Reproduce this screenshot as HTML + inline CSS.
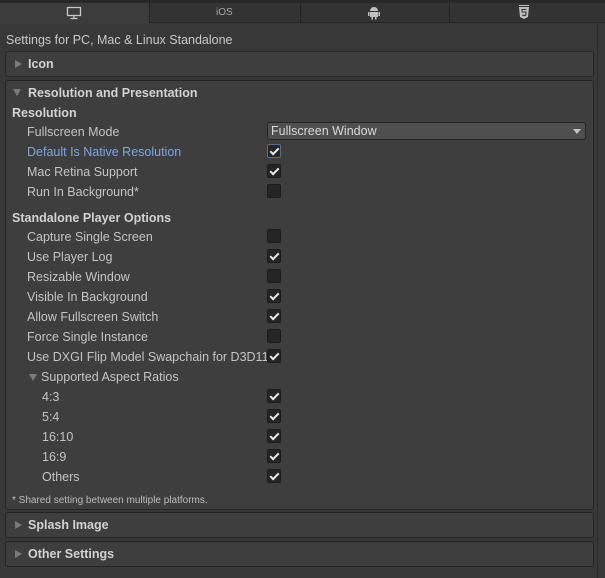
<!DOCTYPE html>
<html><head><style>
*{margin:0;padding:0;box-sizing:border-box}
body{width:605px;height:578px;background:#383838;font-family:"Liberation Sans",sans-serif;font-size:12.5px;color:#c4c4c4;position:relative;overflow:hidden}
.a{position:absolute;white-space:nowrap}
.tab{position:absolute;top:3px;height:20px;background:#333;border-left:1px solid #232323;border-bottom:1px solid #232323}
.box{position:absolute;left:5px;width:589px;background:#3e3e3e;border:1px solid #242424;border-radius:3px}
.hd{font-weight:bold;color:#d2d2d2;font-size:12.5px}
.tri{position:absolute;width:0;height:0}
.r{border-top:4px solid transparent;border-bottom:4px solid transparent;border-left:7px solid #7a7a7a}
.d{border-left:4px solid transparent;border-right:4px solid transparent;border-top:7px solid #7a7a7a}
.cb{position:absolute;left:267px;width:14px;height:14px;background:#252525;border:1px solid #1c1c1c;border-radius:2px}
.cb.c::after{content:"";position:absolute;left:4px;top:1px;width:3px;height:7px;border:solid #e6e6e6;border-width:0 2px 2px 0;transform:rotate(45deg)}
</style></head><body>
<div class="a" style="left:0;top:0;width:605px;height:3px;background:#282828"></div>
<div class="a" style="left:0;top:3px;width:149px;height:21px;background:#3c3c3c"></div>
<div class="tab" style="left:149px;width:151px"></div>
<div class="tab" style="left:300px;width:149px"></div>
<div class="tab" style="left:449px;width:156px"></div>
<svg class="a" style="left:66px;top:6px" width="16" height="14" viewBox="0 0 16 14"><rect x="1.5" y="1.5" width="13" height="8" fill="none" stroke="#c8c8c8" stroke-width="1.3"/><path d="M8 10v2M4.5 12.5h7" stroke="#c8c8c8" stroke-width="1.3"/></svg>
<div class="a" style="left:216px;top:7px;font-size:10px;color:#a8a8a8">iOS</div>
<svg class="a" style="left:367px;top:6px" width="14" height="14" viewBox="0 0 14 14"><path d="M3 5a4 4 0 0 1 8 0z M3 6h8v5H3z M1 6h1.5v4H1z M11.5 6H13v4h-1.5z M4.5 11h1.5v2.5H4.5z M8 11h1.5v2.5H8z" fill="#c0c0c0"/></svg>
<svg class="a" style="left:518px;top:5px" width="12" height="15" viewBox="0 0 12 15"><path d="M1 2h10l-1 10-4 2-4-2z" fill="#c0c0c0"/><path d="M8.3 4.5H4l.2 2.5h3.8l-.2 3L6 10.7 4.2 10" fill="none" stroke="#333" stroke-width="1.1"/><rect x="1" y="0" width="10" height="1" fill="#c0c0c0"/></svg>

<div class="a" style="left:6px;top:33px;color:#c8c8c8">Settings for PC, Mac &amp; Linux Standalone</div>

<div class="box" style="top:51px;height:26px"></div>
<div class="tri r" style="left:15px;top:60px"></div>
<div class="a hd" style="left:28px;top:57px">Icon</div>

<div class="box" style="top:80px;height:430px"></div>
<div class="tri d" style="left:13px;top:89px"></div>
<div class="a hd" style="left:28px;top:86px">Resolution and Presentation</div>
<div class="a hd" style="left:12px;top:106px">Resolution</div>

<div class="a" style="left:27px;top:125px">Fullscreen Mode</div>
<div class="a" style="left:267px;top:122px;width:319px;height:18px;background:#4f4f4f;border:1px solid #262626;border-radius:3px;color:#d8d8d8;padding:1px 0 0 3px">Fullscreen Window</div>
<div class="tri" style="left:573px;top:129px;border-left:4px solid transparent;border-right:4px solid transparent;border-top:5px solid #c4c4c4"></div>

<div class="a" style="left:27px;top:145px;color:#7ba6e0">Default Is Native Resolution</div>
<div class="cb c" style="top:144px;border-color:#4b6f9e"></div>
<div class="a" style="left:27px;top:165px">Mac Retina Support</div><div class="cb c" style="top:164px"></div>
<div class="a" style="left:27px;top:185px">Run In Background*</div><div class="cb" style="top:184px"></div>

<div class="a hd" style="left:12px;top:211px">Standalone Player Options</div>
<div class="a" style="left:27px;top:230px">Capture Single Screen</div><div class="cb" style="top:229px"></div>
<div class="a" style="left:27px;top:250px">Use Player Log</div><div class="cb c" style="top:249px"></div>
<div class="a" style="left:27px;top:270px">Resizable Window</div><div class="cb" style="top:269px"></div>
<div class="a" style="left:27px;top:290px">Visible In Background</div><div class="cb c" style="top:289px"></div>
<div class="a" style="left:27px;top:310px">Allow Fullscreen Switch</div><div class="cb c" style="top:309px"></div>
<div class="a" style="left:27px;top:330px">Force Single Instance</div><div class="cb" style="top:329px"></div>
<div class="a" style="left:27px;top:350px">Use DXGI Flip Model Swapchain for D3D11</div><div class="cb c" style="top:349px"></div>
<div class="tri d" style="left:29px;top:374px"></div>
<div class="a" style="left:41px;top:370px">Supported Aspect Ratios</div>
<div class="a" style="left:42px;top:390px">4:3</div><div class="cb c" style="top:389px"></div>
<div class="a" style="left:42px;top:410px">5:4</div><div class="cb c" style="top:409px"></div>
<div class="a" style="left:42px;top:430px">16:10</div><div class="cb c" style="top:429px"></div>
<div class="a" style="left:42px;top:450px">16:9</div><div class="cb c" style="top:449px"></div>
<div class="a" style="left:42px;top:470px">Others</div><div class="cb c" style="top:469px"></div>
<div class="a" style="left:12px;top:495px;font-size:10px;color:#bdbdbd">* Shared setting between multiple platforms.</div>

<div class="box" style="top:512px;height:26px"></div>
<div class="tri r" style="left:15px;top:521px"></div>
<div class="a hd" style="left:28px;top:518px">Splash Image</div>
<div class="box" style="top:541px;height:26px"></div>
<div class="tri r" style="left:15px;top:550px"></div>
<div class="a hd" style="left:28px;top:547px">Other Settings</div>
<div class="a" style="left:597px;top:24px;width:1px;height:554px;background:#2c2c2c"></div>
</body></html>
